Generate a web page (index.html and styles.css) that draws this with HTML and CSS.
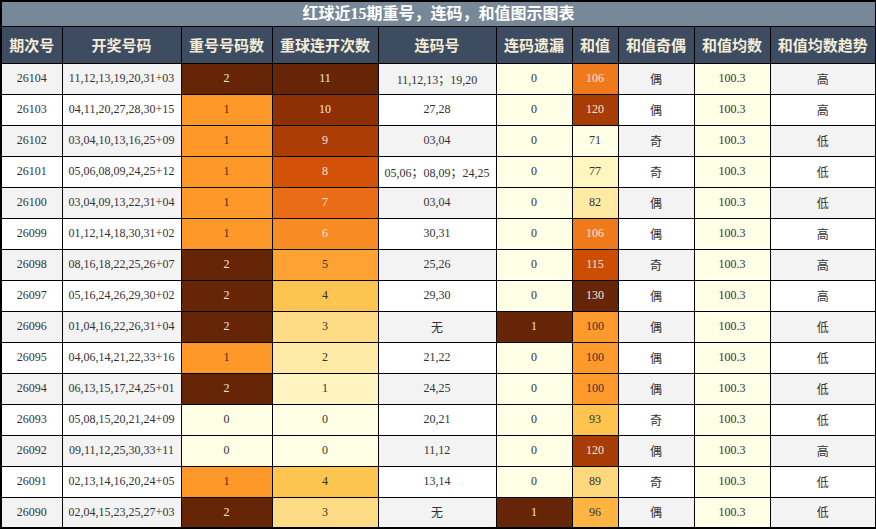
FILE: index.html
```html
<!DOCTYPE html>
<html>
<head>
<meta charset="utf-8">
<link rel="stylesheet" href="styles.css">
</head>
<body>
<table class="chart">
<colgroup>
<col class="w61"><col class="w119"><col class="w91"><col class="w106"><col class="w118"><col class="w76"><col class="w46"><col class="w76"><col class="w76"><col class="w106">
</colgroup>
<thead>
<tr class="title-row"><th colspan="10" class="title">红球近15期重号，连码，和值图示图表</th></tr>
<tr class="head-row">
<th>期次号</th><th>开奖号码</th><th>重号号码数</th><th>重球连开次数</th><th>连码号</th><th>连码遗漏</th><th>和值</th><th>和值奇偶</th><th>和值均数</th><th>和值均数趋势</th>
</tr>
</thead>
<tbody>
<tr class="odd"><td>26104</td><td>11,12,13,19,20,31+03</td><td class="c9 lt">2</td><td class="c9 lt">11</td><td>11,12,13；19,20</td><td class="c0">0</td><td class="s106 lt">106</td><td>偶</td><td class="c0">100.3</td><td>高</td></tr>
<tr><td>26103</td><td>04,11,20,27,28,30+15</td><td class="r1">1</td><td class="k10 lt">10</td><td>27,28</td><td class="c0">0</td><td class="s120 lt">120</td><td>偶</td><td class="c0">100.3</td><td>高</td></tr>
<tr class="odd"><td>26102</td><td>03,04,10,13,16,25+09</td><td class="r1">1</td><td class="k9 lt">9</td><td>03,04</td><td class="c0">0</td><td class="c0">71</td><td>奇</td><td class="c0">100.3</td><td>低</td></tr>
<tr><td>26101</td><td>05,06,08,09,24,25+12</td><td class="r1">1</td><td class="k8 lt">8</td><td>05,06；08,09；24,25</td><td class="c0">0</td><td class="s77">77</td><td>奇</td><td class="c0">100.3</td><td>低</td></tr>
<tr class="odd"><td>26100</td><td>03,04,09,13,22,31+04</td><td class="r1">1</td><td class="k7 lt">7</td><td>03,04</td><td class="c0">0</td><td class="s82">82</td><td>偶</td><td class="c0">100.3</td><td>低</td></tr>
<tr><td>26099</td><td>01,12,14,18,30,31+02</td><td class="r1">1</td><td class="k6 lt">6</td><td>30,31</td><td class="c0">0</td><td class="s106 lt">106</td><td>偶</td><td class="c0">100.3</td><td>高</td></tr>
<tr class="odd"><td>26098</td><td>08,16,18,22,25,26+07</td><td class="c9 lt">2</td><td class="k5">5</td><td>25,26</td><td class="c0">0</td><td class="s115 lt">115</td><td>奇</td><td class="c0">100.3</td><td>高</td></tr>
<tr><td>26097</td><td>05,16,24,26,29,30+02</td><td class="c9 lt">2</td><td class="k4">4</td><td>29,30</td><td class="c0">0</td><td class="c9 lt">130</td><td>偶</td><td class="c0">100.3</td><td>高</td></tr>
<tr class="odd"><td>26096</td><td>01,04,16,22,26,31+04</td><td class="c9 lt">2</td><td class="k3">3</td><td>无</td><td class="c9 lt">1</td><td class="s100">100</td><td>偶</td><td class="c0">100.3</td><td>低</td></tr>
<tr><td>26095</td><td>04,06,14,21,22,33+16</td><td class="r1">1</td><td class="k2">2</td><td>21,22</td><td class="c0">0</td><td class="s100">100</td><td>偶</td><td class="c0">100.3</td><td>低</td></tr>
<tr class="odd"><td>26094</td><td>06,13,15,17,24,25+01</td><td class="c9 lt">2</td><td class="k1">1</td><td>24,25</td><td class="c0">0</td><td class="s100">100</td><td>偶</td><td class="c0">100.3</td><td>低</td></tr>
<tr><td>26093</td><td>05,08,15,20,21,24+09</td><td class="c0">0</td><td class="c0">0</td><td>20,21</td><td class="c0">0</td><td class="s93">93</td><td>奇</td><td class="c0">100.3</td><td>低</td></tr>
<tr class="odd"><td>26092</td><td>09,11,12,25,30,33+11</td><td class="c0">0</td><td class="c0">0</td><td>11,12</td><td class="c0">0</td><td class="s120 lt">120</td><td>偶</td><td class="c0">100.3</td><td>高</td></tr>
<tr><td>26091</td><td>02,13,14,16,20,24+05</td><td class="r1">1</td><td class="k4">4</td><td>13,14</td><td class="c0">0</td><td class="s89">89</td><td>奇</td><td class="c0">100.3</td><td>低</td></tr>
<tr class="odd"><td>26090</td><td>02,04,15,23,25,27+03</td><td class="c9 lt">2</td><td class="k3">3</td><td>无</td><td class="c9 lt">1</td><td class="s96">96</td><td>偶</td><td class="c0">100.3</td><td>低</td></tr>
</tbody>
</table>
</body>
</html>
```
FILE: styles.css
```css
html, body {
  margin: 0;
  padding: 0;
  background: #ffffff;
}
.chart {
  border-collapse: collapse;
  table-layout: fixed;
  width: 876px;
  border: 2px solid #000;
  font-family: "Liberation Serif", "Noto Sans CJK SC", serif;
  font-size: 12px;
  color: #333;
}
.w61 { width: 61px; }
.w119 { width: 119px; }
.w91 { width: 91px; }
.w106 { width: 106px; }
.w118 { width: 118px; }
.w76 { width: 76px; }
.w46 { width: 46px; }
.chart th, .chart td {
  border: 1px solid #000;
  text-align: center;
  padding: 0;
  white-space: nowrap;
  overflow: hidden;
}
.title-row { height: 25px; }
.title {
  background: #778899;
  color: #ffffff;
  font-size: 16px;
  font-weight: bold;
  line-height: 22px;
}
.head-row { height: 37px; }
.head-row th {
  background: #3e4c62;
  color: #f4ecd6;
  font-family: "Noto Sans CJK SC", sans-serif;
  font-size: 15px;
  font-weight: bold;
}
.chart tbody tr { height: 31px; background: #ffffff; }
.chart tbody tr.odd { background: #f3f3f3; }
.lt { color: #f3e6d8; }
.c0 { background: #ffffe5; }
.c9 { background: #662506; }
.r1 { background: #fe9929; color: #4a2c0c; }
.k10 { background: #8e2f04; }
.k9 { background: #ac3d04; }
.k8 { background: #d35207; }
.k7 { background: #ea6c17; }
.k6 { background: #f98b25; }
.k5 { background: #fea233; }
.k4 { background: #fec450; }
.k3 { background: #fedc86; }
.k2 { background: #feeba5; }
.k1 { background: #fff5c2; }
.s106 { background: #ef7a1b; }
.s120 { background: #a73d04; }
.s115 { background: #cd4d02; }
.s77 { background: #fff6c0; }
.s82 { background: #feeaa3; }
.s100 { background: #fe9a2b; }
.s93 { background: #fec44f; }
.s89 { background: #fed87d; }
.s96 { background: #feb442; }
```
